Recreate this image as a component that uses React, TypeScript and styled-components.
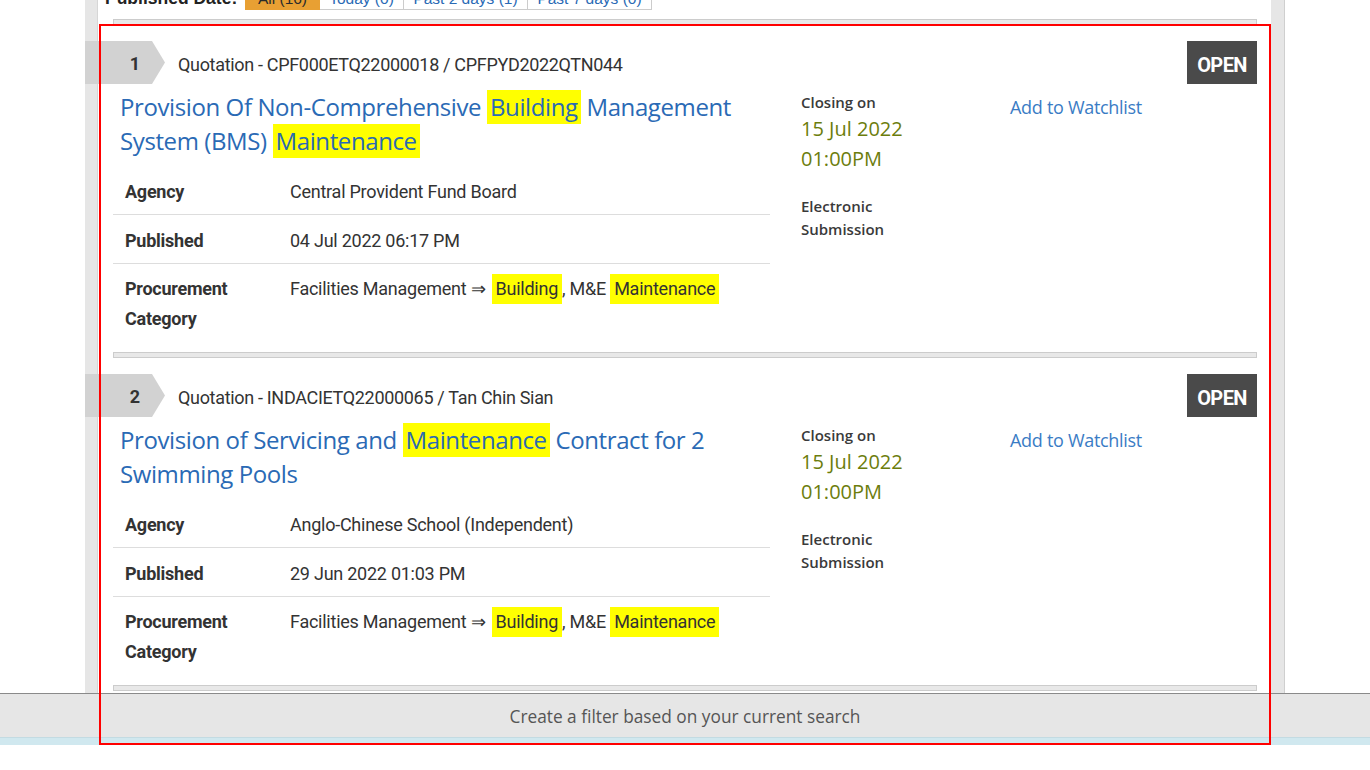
import React from "react";
import styled, { createGlobalStyle } from "styled-components";

const GlobalStyle = createGlobalStyle`
  html, body { margin: 0; padding: 0; background: #fff; overflow: hidden; }
  body { font-family: "Open Sans", "Liberation Sans", sans-serif; }
  * { box-sizing: border-box; }
`;

const Shell = styled.div`
  width: 1200px;
  margin: -22px auto 0;
  background: #e6e6e6;
  padding: 0 13px 0 12px;
  border-right: 1px solid #cfcfcf;
  min-height: 820px;
`;

const Panel = styled.div`
  background: #fff;
  border-left: 1px solid #d6d6d6;
  min-height: 820px;
`;

const FilterRow = styled.div`
  display: flex;
  align-items: stretch;
  height: 32px;
  padding-left: 7px;
  font-family: "Liberation Sans", Arial, sans-serif;
  font-size: 15.5px;
  white-space: nowrap;
`;

const FilterLabel = styled.span`
  display: flex;
  align-items: center;
  padding-top: 8px;
  font-size: 17.5px;
  font-weight: 700;
  color: #222;
  width: 140px;
`;

const FilterButton = styled.span<{ $active?: boolean; $w: number }>`
  display: flex;
  align-items: center;
  justify-content: center;
  padding-top: 9px;
  width: ${(p) => p.$w}px;
  background: ${(p) => (p.$active ? "#e8a033" : "#fff")};
  color: ${(p) => (p.$active ? "#2b2b2b" : "#2a6ab5")};
  border: 1px solid ${(p) => (p.$active ? "#e8a033" : "#cccccc")};
  border-left-width: ${(p) => (p.$active ? "1px" : "0")};
`;

const List = styled.div`
  padding: 9px 14px 0 15px;
`;

const Divider = styled.div<{ $gap?: number }>`
  height: 6px;
  margin-top: ${(p) => p.$gap ?? 0}px;
  background: #e8e8e8;
  border: 1px solid #cccccc;
`;

const Item = styled.div`
  padding-top: 16px;
`;

const Header = styled.div`
  display: flex;
  align-items: center;
  height: 43px;
  margin-left: -28px;
`;

const Tab = styled.div`
  width: 80px;
  height: 43px;
  background: #d2d2d2;
  clip-path: polygon(0 0, 67px 0, 80px 50%, 67px 100%, 0 100%);
  display: flex;
  align-items: center;
  justify-content: flex-end;
  padding-right: 25px;
  padding-top: 2px;
  font-family: Roboto, "Liberation Sans", sans-serif;
  font-weight: 700;
  font-size: 18px;
  color: #333;
`;

const RefText = styled.span`
  margin-left: 13px;
  padding-top: 3px;
  font-family: Roboto, "Liberation Sans", sans-serif;
  font-size: 18px;
  letter-spacing: -0.32px;
  color: #333;
`;

const Badge = styled.span`
  margin-left: auto;
  width: 70px;
  height: 43px;
  background: #4a4a4a;
  color: #fff;
  display: flex;
  align-items: center;
  justify-content: center;
  padding-top: 4px;
  font-family: Roboto, "Liberation Sans", sans-serif;
  font-weight: 700;
  font-size: 20px;
  letter-spacing: -0.6px;
`;

const Body = styled.div`
  display: grid;
  grid-template-columns: 657px 178px 1fr;
  column-gap: 31px;
  align-items: start;
`;

const Title = styled.a`
  display: block;
  margin: 6px 0 0;
  padding-left: 7px;
  font-family: "Open Sans", sans-serif;
  font-size: 24px;
  letter-spacing: -0.4px;
  line-height: 34px;
  color: #2a6ab5;
  text-decoration: none;
`;

const Hl = styled.span<{ $pad?: number; $shift?: number }>`
  display: inline-block;
  background: #ffff00;
  padding: 0 ${(p) => p.$pad ?? 3}px;
  margin-left: ${(p) => p.$shift ?? 0}px;
`;

const Table = styled.div`
  margin-top: 8px;
`;

const Row = styled.div<{ $last?: boolean }>`
  display: grid;
  grid-template-columns: 165px 1fr;
  padding: ${(p) => (p.$last ? "10px 0 8px 12px" : "11px 0 7px 12px")};
  border-bottom: ${(p) => (p.$last ? "none" : "1px solid #dddddd")};
  font-family: Roboto, "Liberation Sans", sans-serif;
  font-size: 18px;
  letter-spacing: -0.25px;
  line-height: 30px;
  color: #333;
`;

const Label = styled.span`
  font-weight: 700;
  width: 110px;
`;

const Closing = styled.div`
  padding-top: 7px;
  font-family: "Open Sans", sans-serif;
`;

const SmallHead = styled.div`
  font-size: 15px;
  font-weight: 600;
  line-height: 23px;
  color: #3a3a3a;
`;

const DateText = styled.div`
  font-size: 20px;
  line-height: 30px;
  color: #6c7d0c;
`;

const Submission = styled(SmallHead)`
  margin-top: 21px;
`;

const Watch = styled.a`
  display: block;
  margin-top: 10px;
  font-family: "Open Sans", sans-serif;
  font-size: 18px;
  letter-spacing: -0.3px;
  line-height: 26px;
  color: #3a7cc5;
  text-decoration: none;
`;

const Footer = styled.div`
  position: fixed;
  left: 0;
  right: 0;
  bottom: 0;
  background: #fff;
  padding-bottom: 25px;
`;

const FooterBar = styled.div`
  height: 44px;
  border-top: 1px solid #8a8a8a;
  background: #e6e6e6;
  display: flex;
  align-items: center;
  justify-content: center;
  padding-top: 2px;
  font-family: "Open Sans", sans-serif;
  font-size: 17.3px;
  color: #555;
`;

const FooterStrip = styled.div`
  height: 8px;
  background: #d0e8ef;
  border-top: 1px solid #c3dbe2;
`;

const Marker = styled.div`
  position: fixed;
  left: 99px;
  top: 24px;
  width: 1172px;
  height: 721px;
  border: 2px solid #ff0000;
  pointer-events: none;
`;

type Tender = {
  n: number;
  ref: string;
  title: React.ReactNode;
  agency: string;
  published: string;
};

const category = (
  <span>
    Facilities Management ⇒ <Hl $pad={4} $shift={2}>Building</Hl>, M&amp;E <Hl $pad={4}>Maintenance</Hl>
  </span>
);

const tenders: Tender[] = [
  {
    n: 1,
    ref: "Quotation - CPF000ETQ22000018 / CPFPYD2022QTN044",
    title: (
      <>
        Provision Of Non-Comprehensive <Hl>Building</Hl> Management System (BMS) <Hl>Maintenance</Hl>
      </>
    ),
    agency: "Central Provident Fund Board",
    published: "04 Jul 2022 06:17 PM",
  },
  {
    n: 2,
    ref: "Quotation - INDACIETQ22000065 / Tan Chin Sian",
    title: (
      <>
        Provision of Servicing and <Hl>Maintenance</Hl> Contract for 2 Swimming Pools
      </>
    ),
    agency: "Anglo-Chinese School (Independent)",
    published: "29 Jun 2022 01:03 PM",
  },
];

const filters = [
  { label: "All (16)", w: 75, active: true },
  { label: "Today (0)", w: 84 },
  { label: "Past 2 days (1)", w: 124 },
  { label: "Past 7 days (0)", w: 124 },
];

export default function App() {
  return (
    <>
      <GlobalStyle />
      <Shell>
        <Panel>
          <FilterRow>
            <FilterLabel>Published Date:</FilterLabel>
            {filters.map((f) => (
              <FilterButton key={f.label} $w={f.w} $active={f.active}>
                {f.label}
              </FilterButton>
            ))}
          </FilterRow>
          <List>
            <Divider />
            {tenders.map((t) => (
              <React.Fragment key={t.n}>
                <Item>
                  <Header>
                    <Tab>{t.n}</Tab>
                    <RefText>{t.ref}</RefText>
                    <Badge>OPEN</Badge>
                  </Header>
                  <Body>
                    <div>
                      <Title href="#">{t.title}</Title>
                      <Table>
                        <Row>
                          <Label>Agency</Label>
                          <span>{t.agency}</span>
                        </Row>
                        <Row>
                          <Label>Published</Label>
                          <span>{t.published}</span>
                        </Row>
                        <Row $last>
                          <Label>Procurement Category</Label>
                          {category}
                        </Row>
                      </Table>
                    </div>
                    <Closing>
                      <SmallHead>Closing on</SmallHead>
                      <DateText>15 Jul 2022</DateText>
                      <DateText>01:00PM</DateText>
                      <Submission>
                        Electronic
                        <br />
                        Submission
                      </Submission>
                    </Closing>
                    <Watch href="#">Add to Watchlist</Watch>
                  </Body>
                </Item>
                <Divider $gap={10} />
              </React.Fragment>
            ))}
          </List>
        </Panel>
      </Shell>
      <Footer>
        <FooterBar>Create a filter based on your current search</FooterBar>
        <FooterStrip />
      </Footer>
      <Marker />
    </>
  );
}
